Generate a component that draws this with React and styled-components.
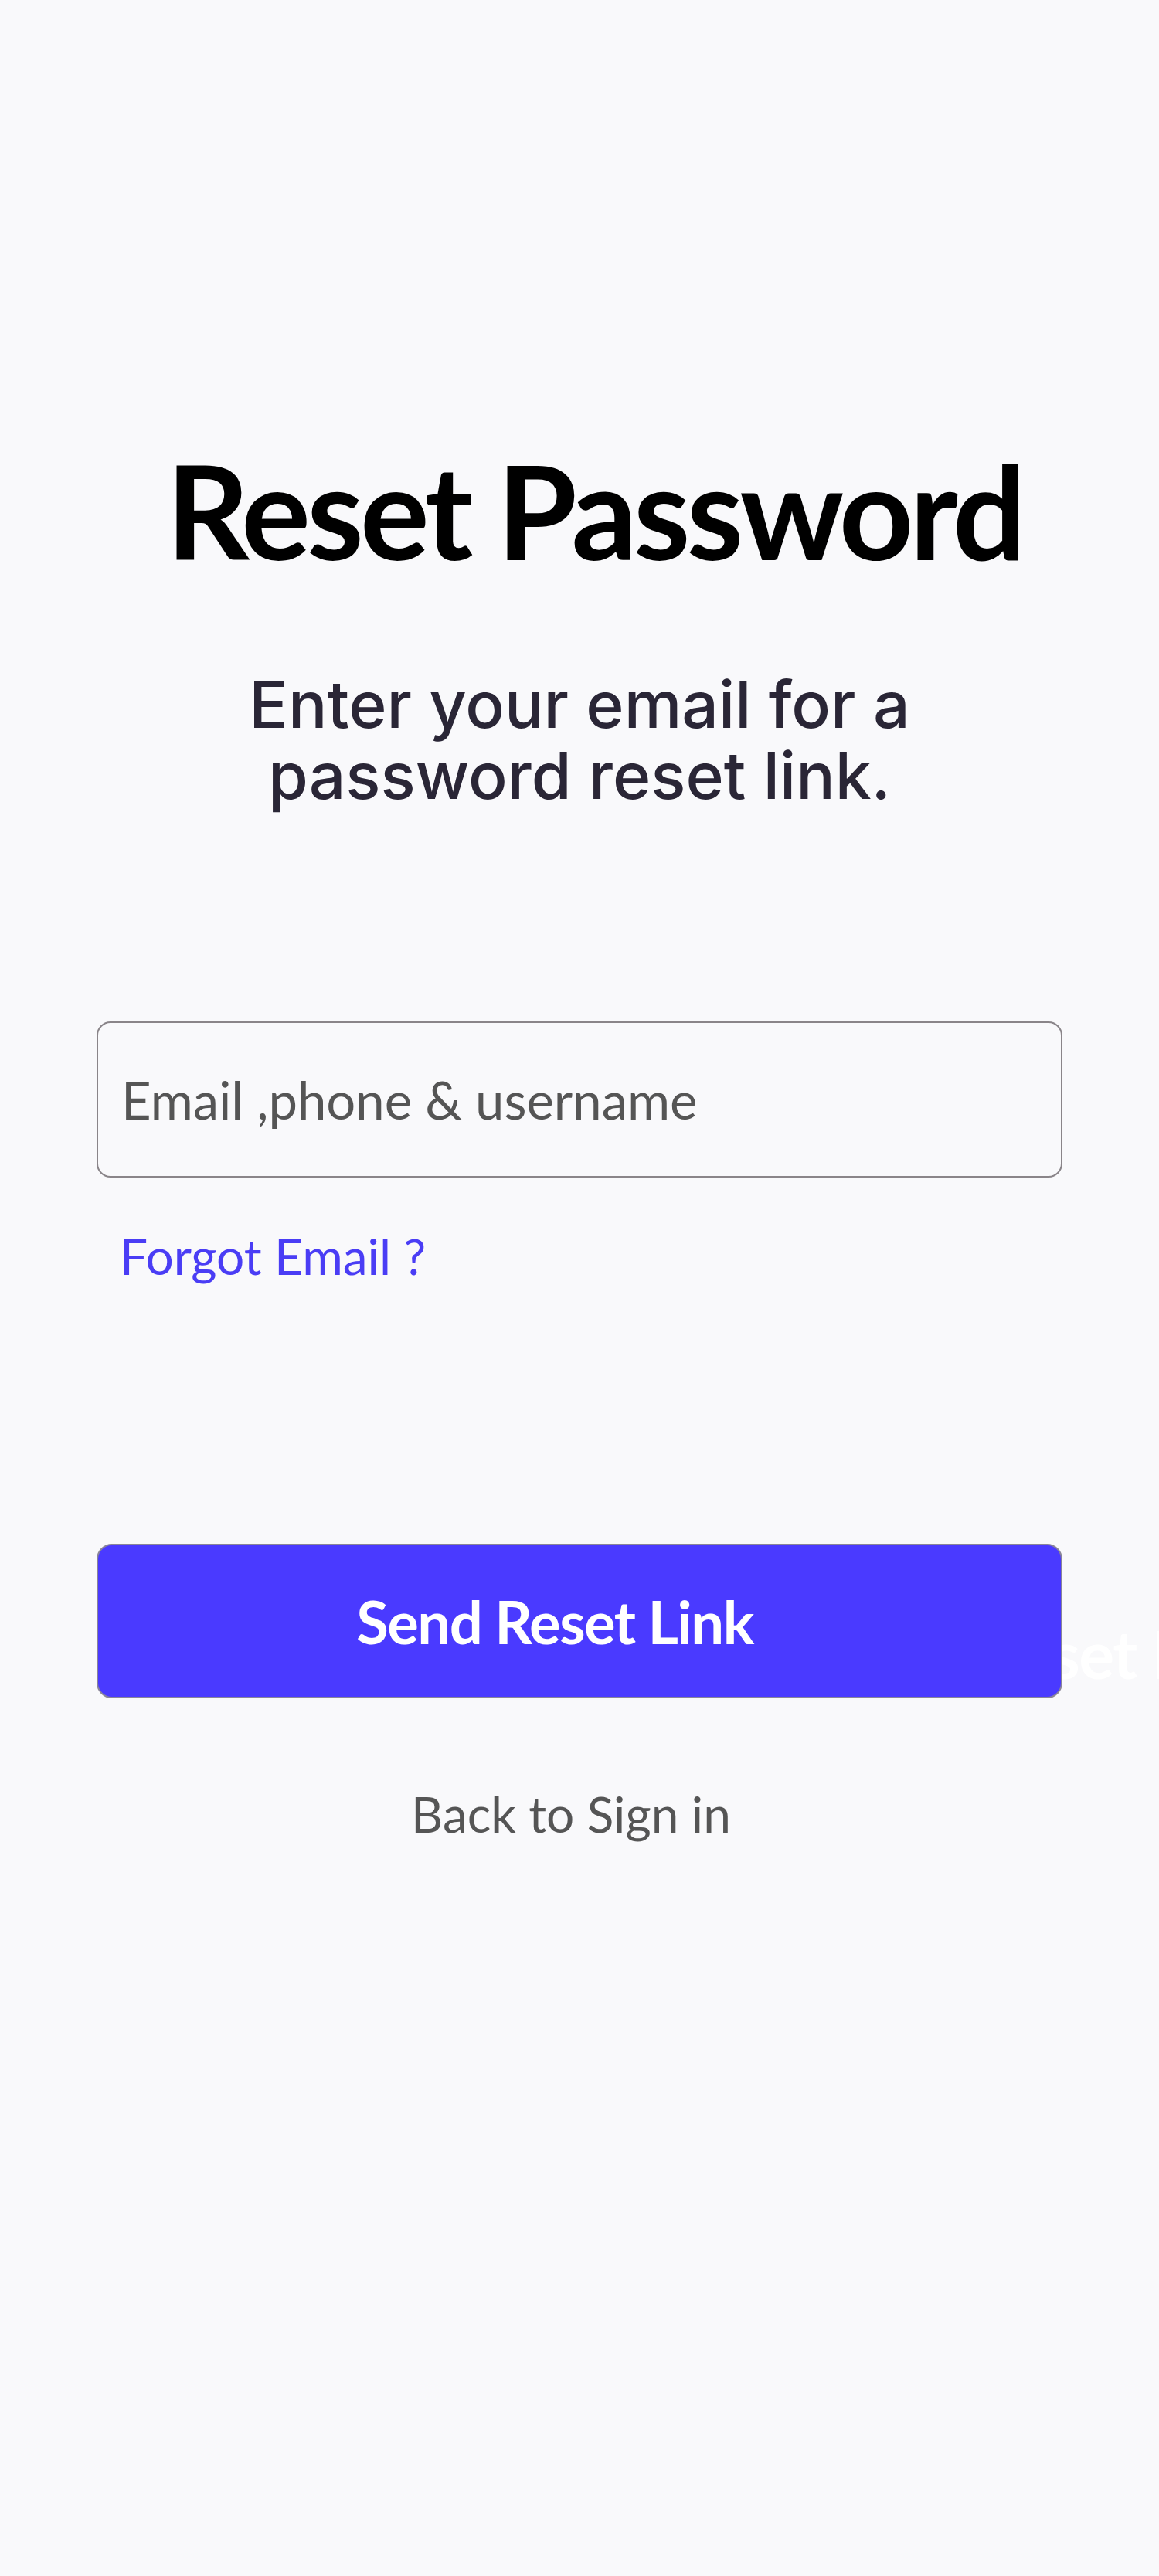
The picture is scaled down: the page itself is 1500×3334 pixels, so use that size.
import React from 'react';
import styled, { createGlobalStyle } from 'styled-components';

const GlobalStyle = createGlobalStyle`
  html, body {
    margin: 0;
    padding: 0;
    background-color: #f9f9fb;
    overflow-x: hidden;
  }
  * {
    box-sizing: border-box;
  }
`;

const Page = styled.main`
  min-height: 3334px;
  display: flex;
  flex-direction: column;
  align-items: center;
  padding-top: 560px;
  font-family: Lato, "Open Sans", sans-serif;
`;

const Title = styled.h1`
  margin: 0;
  padding-left: 38px;
  font-size: 168px;
  line-height: 1.2;
  font-weight: 700;
  letter-spacing: -5px;
  color: #000;
`;

const Subtitle = styled.p`
  margin: 104px 0 0;
  font-family: Inter, "Noto Sans", sans-serif;
  font-size: 84px;
  line-height: 92px;
  font-weight: 500;
  text-align: center;
  color: #2a2636;
`;

const Form = styled.form`
  width: 1250px;
  margin-top: 272px;
  display: flex;
  flex-direction: column;
`;

const Input = styled.input`
  height: 202px;
  width: 100%;
  padding: 0 30px;
  border: 2px solid #8a8589;
  border-radius: 18px;
  background: transparent;
  font-family: inherit;
  font-size: 67px;
  color: #333;
  outline: none;

  &::placeholder {
    color: #555;
  }
`;

const ForgotLink = styled.a`
  margin-top: 64px;
  padding-left: 30px;
  font-size: 64px;
  line-height: 1.2;
  color: #4a3df5;
  text-decoration: none;
`;

const ButtonWrap = styled.div`
  position: relative;
  width: 1250px;
  margin-top: 334px;
`;

const Button = styled.button`
  position: relative;
  z-index: 1;
  width: 100%;
  height: 200px;
  padding: 0 64px 0 0;
  border: 2px solid #8a8599;
  border-radius: 20px;
  background-color: #4a3aff;
  font-family: inherit;
  font-size: 76px;
  font-weight: 700;
  letter-spacing: -1.5px;
  color: #fff;
  cursor: pointer;
`;

const Ghost = styled.span`
  position: absolute;
  top: 90px;
  left: 936px;
  font-size: 86px;
  line-height: 1.2;
  font-weight: 700;
  letter-spacing: -1.5px;
  white-space: nowrap;
  color: #fff;
  pointer-events: none;
`;

const BackLink = styled.a`
  margin-top: 112px;
  padding-right: 22px;
  font-size: 64px;
  line-height: 1.2;
  color: #555;
  text-decoration: none;
`;

const App = () => {
  return (
    <>
      <GlobalStyle />
      <Page>
        <Title>Reset Password</Title>
        <Subtitle>
          Enter your email for a<br />
          password reset link.
        </Subtitle>
        <Form onSubmit={(e) => e.preventDefault()}>
          <Input type="text" placeholder="Email ,phone & username" />
          <ForgotLink href="#">Forgot Email ?</ForgotLink>
        </Form>
        <ButtonWrap>
          <Button type="button">Send Reset Link</Button>
          <Ghost aria-hidden="true">Send Reset Link</Ghost>
        </ButtonWrap>
        <BackLink href="#">Back to Sign in</BackLink>
      </Page>
    </>
  );
};

export default App;
